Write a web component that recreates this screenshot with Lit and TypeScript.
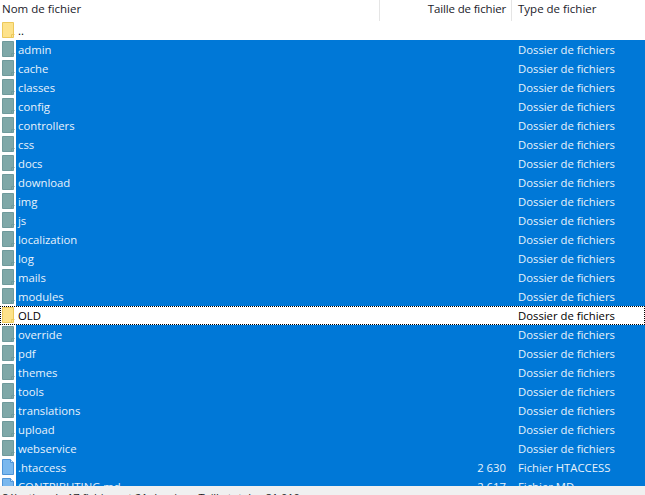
import { LitElement, html, css, svg } from "lit";
import { customElement } from "lit/decorators.js";

type Row = { n: string; s?: string; t: string; k: "dir" | "file"; sel: boolean };
const DIR = "Dossier de fichiers";
const dirs = ["admin","cache","classes","config","controllers","css","docs","download","img","js","localization","log","mails","modules"];
const dirs2 = ["override","pdf","themes","tools","translations","upload","webservice"];
const rows: Row[] = [
  { n: "..", t: "", k: "dir", sel: false },
  ...dirs.map((n) => ({ n, t: DIR, k: "dir" as const, sel: true })),
  { n: "OLD", t: DIR, k: "dir", sel: false },
  ...dirs2.map((n) => ({ n, t: DIR, k: "dir" as const, sel: true })),
  { n: ".htaccess", s: "2 630", t: "Fichier HTACCESS", k: "file", sel: true },
  { n: "CONTRIBUTING.md", s: "2 617", t: "Fichier MD", k: "file", sel: true },
];

@customElement("app-root")
export class AppRoot extends LitElement {
  static styles = css`
    :host { display: block; width: 645px; height: 495px; overflow: hidden; background: #fff;
      font-family: "Open Sans", "Noto Sans", sans-serif; font-size: 11.3px; }
    .head { display: grid; grid-template-columns: 380px 132px 1fr; height: 21px; color: #1a1a2a; font-size: 11.5px; }
    .head > div { line-height: 17px; height: 21px; box-sizing: border-box; border-right: 1px solid #e5e5e5; }
    .head > div:last-child { border-right: 0; }
    .h1 { padding-left: 2px; }
    .h2 { text-align: right; padding-right: 5px; letter-spacing: -0.15px; }
    .h3 { padding-left: 6px; }
    .list { height: 465px; overflow: hidden; }
    .row { display: grid; grid-template-columns: 16px 364px 132px 1fr; height: 19px; line-height: 20px; color: #000; }
    .icon { width: 16px; height: 19px; display: block; }
    .name, .size, .type { height: 19px; box-sizing: border-box; white-space: nowrap; }
    .name { padding-left: 2px; }
    .size { text-align: right; padding-right: 6px; }
    .type { padding-left: 6px; }
    .sel .name, .sel .size, .sel .type { background: #0078d7; color: #e8f2fb; }
    .focus { outline: 1px dotted #000; outline-offset: -1px; }
    .status { height: 9px; background: #f0f0f0; line-height: 13px; padding: 5px 0 0 2px; box-sizing: border-box; overflow: hidden; color: #222; white-space: nowrap; letter-spacing: -0.15px; }
  `;
  icon(k: string, sel: boolean) {
    if (k === "file") {
      return html`<svg class="icon" viewBox="0 0 16 19">
        ${svg`<path d="M2.5 1.5H10.5L13.5 4.5V16.5H2.5Z" fill="#7ab8ee" stroke="#4d94d8"/>
        <path d="M10.5 1.5V4.5H13.5" fill="#cfe4f8" stroke="#4d94d8"/>`}
      </svg>`;
    }
    const fill = sel ? "#7fa8a8" : "#fde28a";
    const stroke = sel ? "#6f9a9c" : "#ecc85a";
    return html`<svg class="icon" viewBox="0 0 16 19">
      ${svg`<path d="M2.5 1.5H13.5V16.5H2.5Z" fill="${fill}" stroke="${stroke}"/>
      <path d="M11.5 16.5V13.5H14.5" fill="none" stroke="${stroke}"/>`}
    </svg>`;
  }
  render() {
    return html`
      <div class="head">
        <div class="h1">Nom de fichier</div>
        <div class="h2">Taille de fichier</div>
        <div class="h3">Type de fichier</div>
      </div>
      <div class="list">
        ${rows.map((r) => html`<div class="row ${r.sel ? "sel" : ""} ${r.n === "OLD" ? "focus" : ""}">
          ${this.icon(r.k, r.sel)}
          <div class="name">${r.n}</div>
          <div class="size">${r.s ?? ""}</div>
          <div class="type">${r.t}</div>
        </div>`)}
      </div>
      <div class="status">Sélection de 17 fichiers et 21 dossiers. Taille totale : 81 010</div>
    `;
  }
}
